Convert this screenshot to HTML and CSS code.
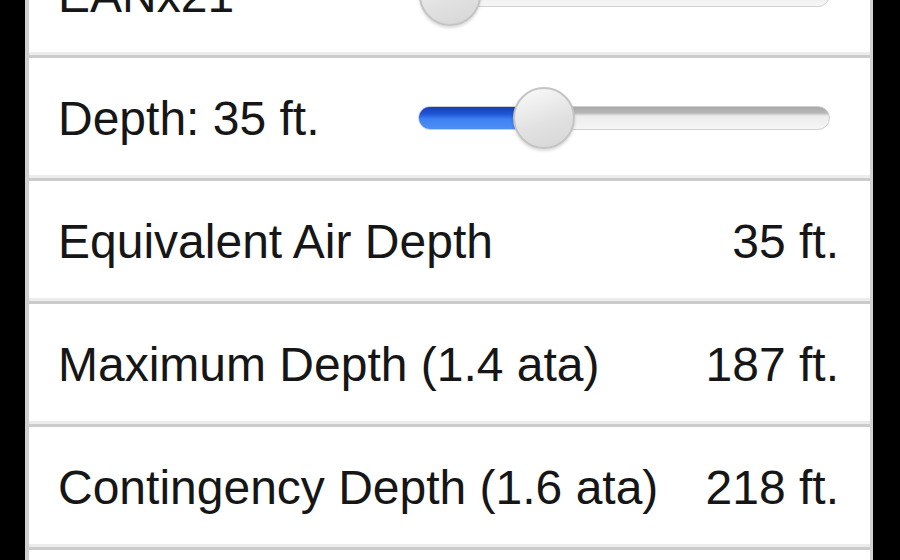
FILE: index.html
```html
<!DOCTYPE html>
<html lang="en">
<head>
    <meta charset="UTF-8">
    <meta name="viewport" content="width=device-width, initial-scale=1.0">
    <title>Nitrox Calculator</title>
    <link rel="stylesheet" href="styles.css">
</head>
<body>
    <div class="screen">
        <ul class="table">
            <li class="cell cell-first">
                <span class="label">EANx21</span>
                <div class="slider">
                    <div class="fill" style="width: 0px"></div>
                    <div class="thumb" style="left: 0px"></div>
                </div>
            </li>
            <li class="cell">
                <span class="label">Depth: 35 ft.</span>
                <div class="slider">
                    <div class="fill" style="width: 125px"></div>
                    <div class="thumb" style="left: 94px"></div>
                </div>
            </li>
            <li class="cell">
                <span class="label">Equivalent Air Depth</span>
                <span class="value">35 ft.</span>
            </li>
            <li class="cell">
                <span class="label">Maximum Depth (1.4 ata)</span>
                <span class="value">187 ft.</span>
            </li>
            <li class="cell">
                <span class="label">Contingency Depth (1.6 ata)</span>
                <span class="value">218 ft.</span>
            </li>
            <li class="cell"></li>
        </ul>
    </div>
</body>
</html>
```

FILE: styles.css
```css
* {
    box-sizing: border-box;
}

html, body {
    margin: 0;
    height: 560px;
    overflow: hidden;
    background-color: #000;
}

.screen {
    margin-left: 25px;
    width: 848px;
    height: 560px;
    overflow: hidden;
    background-color: #fff;
    border-left: 4px solid #cfcfcf;
    border-right: 3px solid #d2d2d2;
}

.table {
    list-style: none;
    margin: -65px 0 0 0;
    padding: 0;
}

.cell {
    display: flex;
    align-items: center;
    height: 123px;
    padding: 0 31px 0 29px;
    border-bottom: 3px solid #cbcbcb;
    box-shadow: inset 0 -3px 0 #ececec;
    font-family: "Liberation Sans", Arial, sans-serif;
    font-size: 48px;
    color: #161616;
}

.cell .label {
    flex: 1;
    white-space: nowrap;
}

.cell .value {
    white-space: nowrap;
}

.slider {
    position: relative;
    width: 412px;
    height: 24px;
    margin-right: 9px;
    border-radius: 12px;
    background: linear-gradient(#a9a9a9 0, #b8b8b8 6px, #ececec 9px, #f6f6f6 100%);
    border: 1px solid #d0d0d0;
}

.slider .fill {
    height: 100%;
    border-radius: 12px 0 0 12px;
    background: linear-gradient(#1640b8 0, #1f55d6 7px, #3d80f2 12px, #4f8ff4 100%);
}

.slider .thumb {
    position: absolute;
    top: -20px;
    width: 62px;
    height: 62px;
    border-radius: 50%;
    border: 2px solid #c4c4c4;
    background: linear-gradient(160deg, #fbfbfb 0%, #e2e2e2 55%, #d6d6d6 100%);
    box-shadow: 0 2px 3px rgba(0, 0, 0, 0.15);
}
```
